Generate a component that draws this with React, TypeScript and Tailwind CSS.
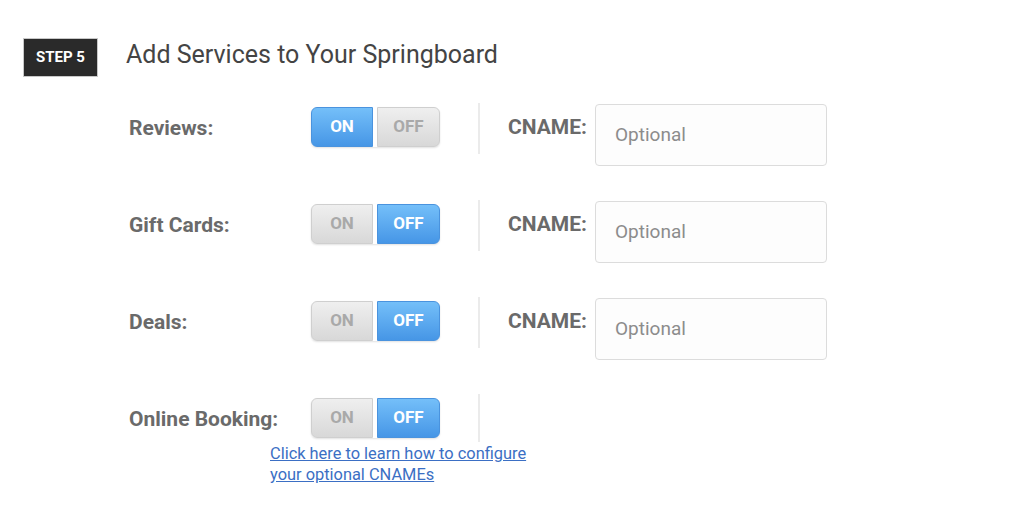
import React from "react";

interface Service {
    name: string,
    on: boolean,
    cname: boolean
}

const services: Service[] = [
    { name: "Reviews:", on: true, cname: true },
    { name: "Gift Cards:", on: false, cname: true },
    { name: "Deals:", on: false, cname: true },
    { name: "Online Booking:", on: false, cname: false },
];

const activeCls = "bg-gradient-to-b from-[#74bff9] to-[#4696e6] border border-[#4a93de] text-white";
const idleCls = "bg-gradient-to-b from-[#efefef] to-[#d8d8d8] border border-[#cfcfcf] text-[#a9a9a9]";

const Toggle = (props: { on: boolean }) => {
    return (
        <div className="flex mt-[4px] h-[40px] shadow-[0_1px_2px_rgba(0,0,0,0.12)] rounded-[6px]">
            <button className={"w-[62px] h-full rounded-l-[6px] text-[17px] font-bold " + (props.on ? activeCls : idleCls)}>
                ON
            </button>
            <div className="w-[4px] bg-white" />
            <button className={"w-[63px] h-full rounded-r-[6px] text-[17px] font-bold " + (!props.on ? activeCls : idleCls)}>
                OFF
            </button>
        </div>
    )
}

const Row = (props: { service: Service }) => {
    const s = props.service;
    return (
        <div className={"flex items-start " + (s.cname ? "h-[97px]" : "h-[49px]")}>
            <div className="w-[182px] pt-[12px] text-[21px] leading-[26px] font-bold text-[#6a6a6a]">{s.name}</div>
            <Toggle on={s.on} />
            <div className={"ml-[38px] w-[2px] bg-[#ebebeb] " + (s.cname ? "h-[51px]" : "h-[48px]")} />
            {s.cname ? (
                <>
                    <div className="ml-[28px] w-[87px] pt-[11px] text-[21px] leading-[26px] font-bold text-[#6a6a6a]">CNAME:</div>
                    <input
                        className="mt-[1px] w-[232px] h-[62px] rounded-[4px] border border-[#dcdcdc] bg-[#fdfdfd] px-[19px] pb-[2px] text-[19px] text-[#888] placeholder:text-[#8c8c8c] outline-none"
                        placeholder="Optional"
                        onChange={() => {}}
                    />
                </>
            ) : null}
        </div>
    )
}

export default function App() {
    return (
        <div className="w-[1024px] h-[522px] bg-white pl-[23px] pt-[38px]" style={{ fontFamily: "Roboto, 'Liberation Sans', sans-serif" }}>
            <div className="flex items-center">
                <div className="w-[75px] h-[39px] bg-[#2a2a2a] border border-[#c8c8c8] flex items-center justify-center text-white text-[15px] font-bold">
                    STEP 5
                </div>
                <h1 className="ml-[28px] text-[25px] text-[#444] leading-[30px] -mt-[5px]">Add Services to Your Springboard</h1>
            </div>
            <div className="ml-[106px] mt-[26px]">
                {services.map((s) => <Row key={s.name} service={s} />)}
            </div>
            <a href="#" className="block ml-[247px] w-[275px] text-[16.4px] leading-[21px] text-[#3b6fc4] underline">
                Click here to learn how to configure your optional CNAMEs
            </a>
        </div>
    )
}
